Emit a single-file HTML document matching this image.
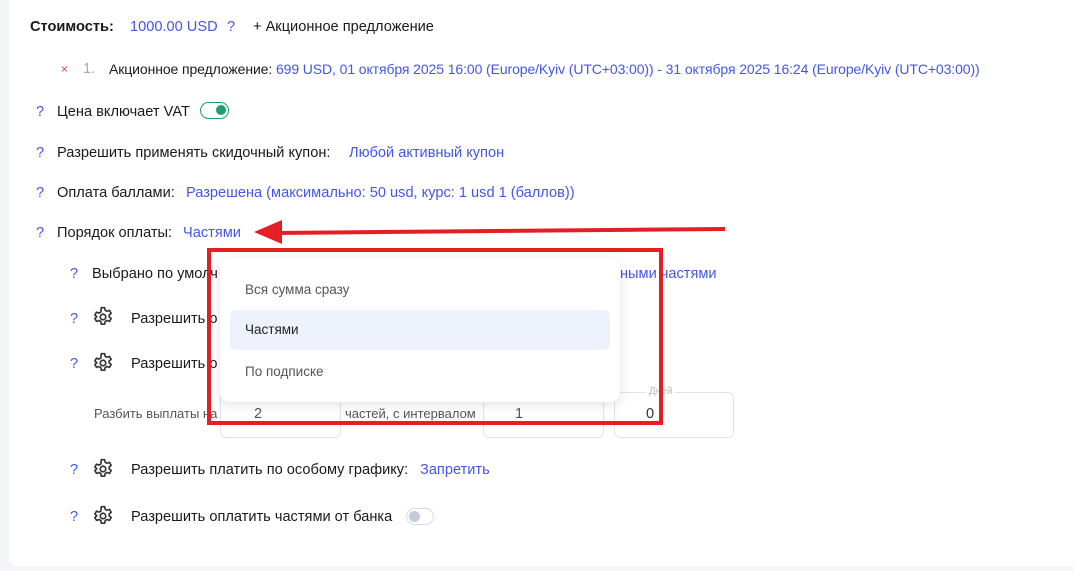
<!DOCTYPE html>
<html><head><meta charset="utf-8"><style>
body{margin:0;width:1073px;height:571px;background:#f3f5f9;font-family:"Liberation Sans",sans-serif;font-size:14.6px;color:#1a1a1a;position:relative;overflow:hidden}
.card{position:absolute;left:9px;top:0;width:1064px;height:566px;background:#fff;border-radius:0 0 0 8px}
.t{position:absolute;white-space:nowrap;line-height:16px}
.b{color:#4456e6}
.q{color:#4456e6}
.gear{position:absolute;width:22px;height:22px}
.box{position:absolute;border:1px solid #dfe3ec;border-radius:6px;height:44px;top:392px}
</style></head><body>
<div class="card"></div>
<div class="t" style="left:30px;top:19px;font-weight:bold">Стоимость:</div>
<div class="t b" style="left:130px;top:19px">1000.00 USD</div>
<div class="t b" style="left:227px;top:19px">?</div>
<div class="t" style="left:253px;top:19px">+ Акционное предложение</div>
<div class="t" style="left:61px;top:61px;color:#e04040;font-size:12px">×</div>
<div class="t" style="left:83px;top:61px;color:#aab">1.</div>
<div class="t" style="left:109px;top:61px;font-size:14px;letter-spacing:-0.1px">Акционное предложение: <span class="b">699 USD, 01 октября 2025 16:00 (Europe/Kyiv (UTC+03:00)) - 31 октября 2025 16:24 (Europe/Kyiv (UTC+03:00))</span></div>
<div class="t q" style="left:36px;top:104px">?</div>
<div class="t" style="left:57px;top:104px">Цена включает VAT</div>
<div style="position:absolute;left:200px;top:102px;width:29px;height:17px;border:1.5px solid #1e9e6a;border-radius:9px;box-sizing:border-box"><div style="position:absolute;right:2px;top:2px;width:10px;height:10px;border-radius:50%;background:#1e9e6a"></div></div>
<div class="t q" style="left:36px;top:145px">?</div>
<div class="t" style="left:57px;top:145px">Разрешить применять скидочный купон:</div>
<div class="t b" style="left:349px;top:145px">Любой активный купон</div>
<div class="t q" style="left:36px;top:185px">?</div>
<div class="t" style="left:57px;top:185px">Оплата баллами:</div>
<div class="t b" style="left:186px;top:185px">Разрешена (максимально: 50 usd, курс: 1 usd 1 (баллов))</div>
<div class="t q" style="left:36px;top:225px">?</div>
<div class="t" style="left:57px;top:225px">Порядок оплаты:</div>
<div class="t b" style="left:183px;top:225px">Частями</div>
<div class="t q" style="left:70px;top:266px">?</div>
<div class="t" style="left:92px;top:266px">Выбрано по умолч</div>
<div class="t b" style="left:620px;top:266px">ными частями</div>
<div class="t q" style="left:70px;top:311px">?</div>
<div class="t" style="left:131px;top:311px">Разрешить о</div>
<div class="t q" style="left:70px;top:356px">?</div>
<div class="t" style="left:131px;top:356px">Разрешить о</div>
<div class="t q" style="left:70px;top:462px">?</div>
<div class="t" style="left:131px;top:462px">Разрешить платить по особому графику:</div>
<div class="t b" style="left:420px;top:462px">Запретить</div>
<div class="t q" style="left:70px;top:509px">?</div>
<div class="t" style="left:131px;top:509px">Разрешить оплатить частями от банка</div>
<div style="position:absolute;left:406px;top:508px;width:28px;height:17px;border:1px solid #d5dae5;border-radius:9px;box-sizing:border-box"><div style="position:absolute;left:2px;top:2px;width:11px;height:11px;border-radius:50%;background:#c4cbdc"></div></div>
<svg width="0" height="0" style="position:absolute"><defs><g id="g"><path d="M8.5 1.5h3l.5 2.4 1.6.9 2.3-.8 1.5 2.6-1.8 1.6v1.6l1.8 1.6-1.5 2.6-2.3-.8-1.6.9-.5 2.4h-3l-.5-2.4-1.6-.9-2.3.8-1.5-2.6 1.8-1.6V9.8L2.6 8.2l1.5-2.6 2.3.8 1.6-.9z" fill="none" stroke="#333" stroke-width="1.5" stroke-linejoin="round"/><circle cx="10" cy="10" r="2.5" fill="none" stroke="#333" stroke-width="1.5"/></g></defs></svg>
<svg class="gear" style="left:92px;top:306px" viewBox="0 0 20 20"><use href="#g"/></svg>
<svg class="gear" style="left:92px;top:352px" viewBox="0 0 20 20"><use href="#g"/></svg>
<svg class="gear" style="left:92px;top:458px" viewBox="0 0 20 20"><use href="#g"/></svg>
<svg class="gear" style="left:92px;top:505px" viewBox="0 0 20 20"><use href="#g"/></svg>
<div class="t" style="left:94px;top:406px;color:#555;font-size:13px">Разбить выплаты на</div>
<div class="box" style="left:220px;width:119px"></div>
<div class="t" style="left:254px;top:406px;color:#555">2</div>
<div class="t" style="left:345px;top:406px;color:#555;font-size:13px">частей, с интервалом</div>
<div class="box" style="left:483px;width:119px"></div>
<div class="t" style="left:515px;top:406px;color:#555">1</div>
<div class="box" style="left:614px;width:118px"></div>
<div class="t" style="left:646px;top:384px;color:#bbb;font-size:10px;background:#fff;padding:0 3px">Дней</div>
<div class="t" style="left:646px;top:406px;color:#333">0</div>
<div style="position:absolute;left:220px;top:258px;width:400px;height:144px;background:#fff;border-radius:10px;box-shadow:0 3px 12px rgba(30,40,80,.13)">
<div class="t" style="left:25px;top:24px;color:#555;font-size:13.5px">Вся сумма сразу</div>
<div style="position:absolute;left:10px;top:52px;width:380px;height:40px;background:#eef2fc;border-radius:5px"></div>
<div class="t" style="left:25px;top:64px;color:#222;font-size:13.5px">Частями</div>
<div class="t" style="left:25px;top:106px;color:#555;font-size:13.5px">По подписке</div>
</div>
<div style="position:absolute;left:207px;top:248px;width:456px;height:177px;border:4px solid #e41e25;box-sizing:border-box"></div>
<svg style="position:absolute;left:0;top:0" width="1073" height="571"><line x1="725" y1="229" x2="275" y2="233" stroke="#e41e25" stroke-width="4"/><polygon points="254,232 282,220 282,244" fill="#e41e25"/></svg>
</body></html>
